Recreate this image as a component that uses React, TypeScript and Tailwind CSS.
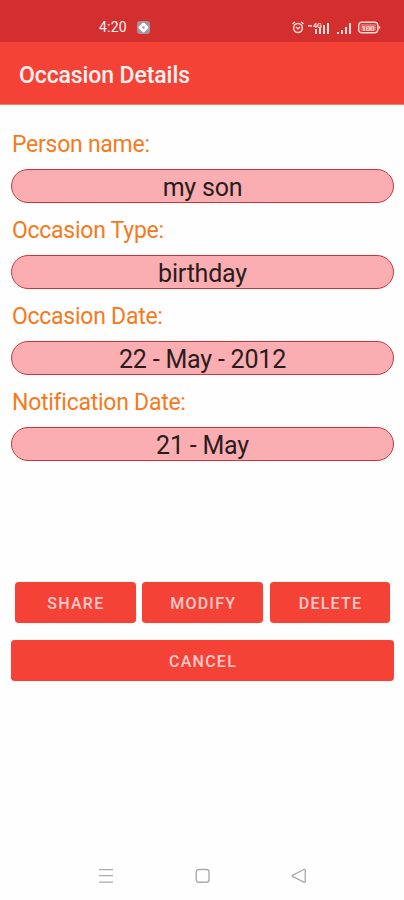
import React from "react";

const fields = [
  { label: "Person name:", value: "my son" },
  { label: "Occasion Type:", value: "birthday" },
  { label: "Occasion Date:", value: "22 - May - 2012" },
  { label: "Notification Date:", value: "21 - May" },
];

const actions = ["SHARE", "MODIFY", "DELETE"];

const StatusBar: React.FC = () => {
  return (
    <div className="flex h-[42px] items-start justify-between bg-[#d32f2f] pt-[18px] pr-[23px] pl-[99px] text-[#ffdcd8]">
      <div className="flex items-center">
        <span className="w-[30px] text-[14px] leading-[19px] tracking-[0.2px] whitespace-nowrap text-[#fff1ef]">4:20</span>
        <svg className="ml-[8px]" width="13" height="13" viewBox="0 0 13 13">
          <rect width="13" height="13" rx="3" fill="#a3939f" />
          <path d="M6.500 2.500L10.500 6.500 6.500 10.500 2.500 6.500z" fill="#fff" stroke="#fff" strokeWidth="2" strokeLinejoin="round" />
          <circle cx="6.5" cy="6.5" r="1.2" fill="#a3939f" />
        </svg>
      </div>
      <div className="flex h-[19px] items-center">
        <svg width="13" height="13" viewBox="0 0 13 13" fill="none" stroke="currentColor" strokeWidth="1.500">
          <circle cx="6" cy="7" r="4.4" />
          <path d="M.5 2.800L3 1M11.500 2.800L9 1M4 6l2 1.700 2-1.700" />
        </svg>
        <svg className="ml-[3px]" width="23" height="14" viewBox="0 0 23 14" fill="currentColor">
          <rect x="0" y="4" width="4" height="1.500" />
          <text x="5" y="7" fontSize="8" fontWeight="700" textLength="9" lengthAdjust="spacingAndGlyphs">4G</text>
          <rect x="7" y="8" width="2" height="5" />
          <rect x="11" y="7" width="2" height="6" />
          <rect x="15" y="4" width="2" height="9" />
          <rect x="19" y="2" width="2" height="11" />
        </svg>
        <svg className="ml-[6px]" width="16" height="14" viewBox="0 0 16 14" fill="currentColor">
          <rect x="0" y="11" width="2" height="2" />
          <rect x="4" y="9" width="2" height="4" />
          <rect x="8" y="6" width="2" height="7" />
          <rect x="12" y="2" width="2" height="11" />
        </svg>
        <svg className="ml-[5px]" width="23" height="13" viewBox="0 0 23 13">
          <rect x="0.700" y="1.200" width="19" height="10.600" rx="3" fill="none" stroke="currentColor" strokeWidth="1.400" />
          <rect x="2.500" y="3" width="15.500" height="7" rx="1.500" fill="currentColor" opacity="0.350" />
          <path d="M20.500 4.300l2 2.200-2 2.200z" fill="currentColor" />
          <text x="3.500" y="9.500" fontSize="8" fontWeight="700" fill="currentColor" textLength="13">100</text>
        </svg>
      </div>
    </div>
  );
};

const NavigationBar: React.FC = () => {
  return (
    <div className="flex h-[48px] items-center justify-between pr-[97px] pl-[98px] text-[#aaaaaa]">
      <svg width="16" height="16" viewBox="0 0 16 16" fill="none" stroke="currentColor" strokeWidth="1.300">
        <path d="M1 1.700h14M1 7.700h14M1 14.200h14" />
      </svg>
      <svg width="16" height="16" viewBox="0 0 16 16" fill="none" stroke="currentColor" strokeWidth="1.400">
        <rect x="1.200" y="1.500" width="12.800" height="12.800" rx="2.500" />
      </svg>
      <svg width="16" height="16" viewBox="0 0 16 16" fill="none" stroke="currentColor" strokeWidth="1.300" strokeLinejoin="round">
        <path d="M1.500 7.300Q.7 7.800 1.500 8.300L12.800 14.200Q14.200 14.600 14.200 13.200V2.500Q14.200 1.100 12.800 1.500z" />
      </svg>
    </div>
  );
};

const App: React.FC = () => {
  return (
    <div className="flex h-[900px] w-[404px] flex-col bg-[#fefefe] font-['Roboto',sans-serif]">
      <StatusBar />
      <header className="flex h-[63px] items-center border-b border-[#f77d73] bg-[#f44336] pt-[5px] pl-[19px]">
        <h1 className="text-[23px] leading-[30px] font-medium tracking-[-0.1px] whitespace-nowrap text-[#fff1ef]">
          Occasion Details
        </h1>
      </header>

      <main className="flex flex-1 flex-col px-[11px] pt-[25px]">
        {fields.map((field) => (
          <div key={field.label} className="h-[86px]">
            <p className="h-[39px] pl-px text-[23px] leading-[30px] tracking-[-0.260px] whitespace-nowrap text-[#f67a1c]">
              {field.label}
            </p>
            <div className="h-[34px] w-[383px] rounded-full border border-[#c9373c] bg-[#faaeb1] text-center text-[25px] leading-[35px] tracking-[-0.2px] text-[#2a1c1d]">
              {field.value}
            </div>
          </div>
        ))}

        <div className="mt-[108px] flex gap-[6.500px] pl-[4px]">
          {actions.map((action) => (
            <button
              key={action}
              className="h-[41px] w-[120.800px] rounded-[4px] bg-[#f44336] pt-[2px] pl-px text-[16px] font-medium tracking-[1.250px] text-[#ffc9cb] shadow-[0_0_1px_#f4433680]"
            >
              {action}
            </button>
          ))}
        </div>
        <button className="mt-[17px] h-[41px] w-[383px] rounded-[4px] bg-[#f44336] pt-[2px] pl-px text-[16px] font-medium tracking-[1.250px] text-[#ffc9cb] shadow-[0_0_1px_#f4433680]">
          CANCEL
        </button>
      </main>

      <NavigationBar />
    </div>
  );
};

export default App;
